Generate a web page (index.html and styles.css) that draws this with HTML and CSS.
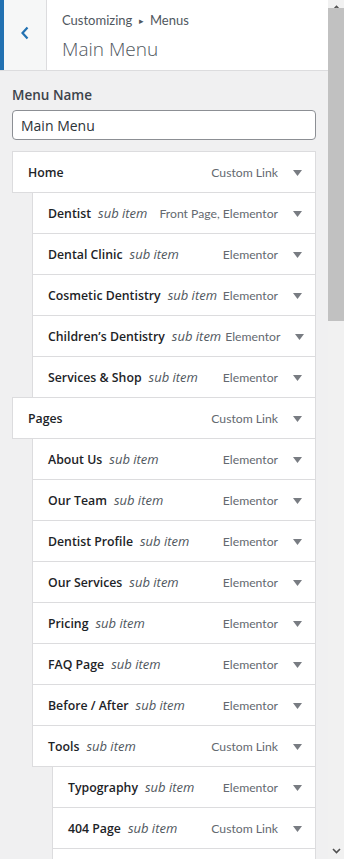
FILE: index.html
```html
<!DOCTYPE html>
<html lang="en">
<head>
    <meta charset="UTF-8">
    <meta name="viewport" content="width=device-width, initial-scale=1.0">
    <title>Customizing Menus</title>
    <link rel="stylesheet" href="styles.css">
</head>
<body>
    <div class="panel">
        <div class="panel-header">
            <button class="back-btn" aria-label="Back">
                <svg width="10" height="14" viewBox="0 0 10 14"><polyline points="7.5,1.5 2.5,7 7.5,12.5" fill="none" stroke="#2271b1" stroke-width="2.2"/></svg>
            </button>
            <div class="panel-title">
                <div class="crumbs">Customizing <span class="crumb-sep">&#9656;</span> Menus</div>
                <h1>Main Menu</h1>
            </div>
        </div>

        <div class="panel-body">
            <label class="field-label" for="menuName">Menu Name</label>
            <input id="menuName" class="field-input" type="text" value="Main Menu">

            <ul class="menu-list" id="menuList"></ul>
        </div>
    </div>

    <div class="scrollbar">
        <div class="scroll-btn">
            <svg width="9" height="6" viewBox="0 0 9 6"><polyline points="1,5 4.5,1.5 8,5" fill="none" stroke="#505050" stroke-width="1.6"/></svg>
        </div>
        <div class="scroll-track">
            <div class="scroll-thumb"></div>
        </div>
        <div class="scroll-btn">
            <svg width="9" height="6" viewBox="0 0 9 6"><polyline points="1,1 4.5,4.5 8,1" fill="none" stroke="#505050" stroke-width="1.6"/></svg>
        </div>
    </div>

    <script>
        const items = [
            ['Home', 0, 'Custom Link'],
            ['Dentist', 1, 'Front Page, Elementor'],
            ['Dental Clinic', 1, 'Elementor'],
            ['Cosmetic Dentistry', 1, 'Elementor'],
            ['Children\u2019s Dentistry', 1, 'Elementor'],
            ['Services & Shop', 1, 'Elementor'],
            ['Pages', 0, 'Custom Link'],
            ['About Us', 1, 'Elementor'],
            ['Our Team', 1, 'Elementor'],
            ['Dentist Profile', 1, 'Elementor'],
            ['Our Services', 1, 'Elementor'],
            ['Pricing', 1, 'Elementor'],
            ['FAQ Page', 1, 'Elementor'],
            ['Before / After', 1, 'Elementor'],
            ['Tools', 1, 'Custom Link'],
            ['Typography', 2, 'Elementor'],
            ['404 Page', 2, 'Custom Link'],
            [null, 2, null] // next item, below the fold
        ];

        const list = document.getElementById('menuList');

        items.forEach(([title, depth, type]) => {
            const li = document.createElement('li');
            li.className = `menu-item depth-${depth}`;
            if (title) {
                li.innerHTML = `
                    <span class="item-title">${title.replace('&', '&amp;')}</span>
                    ${depth > 0 ? '<span class="item-sub">sub item</span>' : ''}
                    <span class="item-type">${type}</span>
                    <span class="item-toggle">
                        <svg width="9" height="6" viewBox="0 0 9 6"><polygon points="0,0 9,0 4.5,6" fill="#787c82"/></svg>
                    </span>
                `;
            }
            list.appendChild(li);
        });
    </script>
</body>
</html>
```

FILE: styles.css
```css
* {
    margin: 0;
    padding: 0;
    box-sizing: border-box;
}

html, body {
    height: 859px;
    overflow: hidden;
}

body {
    display: flex;
    background: #f0f0f1;
    font-family: "Open Sans", "Noto Sans", sans-serif;
    color: #1d2327;
}

.panel {
    flex: 1;
    min-width: 0;
}

/* header */
.panel-header {
    display: flex;
    height: 71px;
    background: #fff;
    border-bottom: 1px solid #dcdcde;
}

.back-btn {
    width: 47px;
    border: none;
    border-left: 4px solid #2271b1;
    border-right: 1px solid #dcdcde;
    background: #f6f7f7;
    display: flex;
    align-items: center;
    justify-content: center;
    padding-bottom: 4px;
}

.panel-title {
    padding: 10px 0 0 15px;
    color: #50575e;
}

.crumbs {
    font-family: Lato, sans-serif;
    font-size: 13px;
    line-height: 20px;
}

.crumb-sep {
    font-size: 9px;
    position: relative;
    top: -1px;
    margin: 0 3px;
}

h1 {
    font-size: 19px;
    font-weight: 300;
    line-height: 32px;
    margin-top: 1px;
}

/* body */
.panel-body {
    padding: 12px 12px 0;
}

.field-label {
    display: block;
    font-size: 13.5px;
    font-weight: 600;
    color: #3c434a;
    line-height: 24px;
    margin-bottom: 3px;
}

.field-input {
    display: block;
    width: 100%;
    height: 30px;
    border: 1px solid #8c8f94;
    border-radius: 4px;
    padding: 0 8px;
    font-family: inherit;
    font-size: 14px;
    color: #2c3338;
    background: #fff;
}

.menu-list {
    list-style: none;
    margin-top: 11px;
}

.menu-item {
    display: flex;
    align-items: center;
    height: 42px;
    margin-top: -1px;
    background: #fff;
    border: 1px solid #dcdcde;
    padding: 0 13px 0 15px;
    font-size: 13px;
}

.menu-item:first-child {
    margin-top: 0;
}

.depth-1 { margin-left: 20px; }
.depth-2 { margin-left: 40px; }

.item-title {
    font-size: 12.3px;
    font-weight: 600;
    color: #1d2327;
    white-space: nowrap;
}

.item-sub {
    font-style: italic;
    color: #50575e;
    margin-left: 7px;
    white-space: nowrap;
}

.item-type {
    font-family: Lato, sans-serif;
    font-size: 12.2px;
    margin-left: auto;
    padding-left: 4px;
    color: #646970;
    white-space: nowrap;
}

.item-toggle {
    display: flex;
    margin-left: 15px;
    padding-top: 1px;
}

/* fake scrollbar */
.scrollbar {
    width: 16px;
    display: flex;
    flex-direction: column;
    background: #f1f1f1;
}

.scroll-btn {
    height: 16px;
    display: flex;
    align-items: center;
    justify-content: center;
}

.scroll-track {
    flex: 1;
}

.scroll-thumb {
    height: 313px;
    margin-top: -8px;
    background: #c1c1c1;
}
```
